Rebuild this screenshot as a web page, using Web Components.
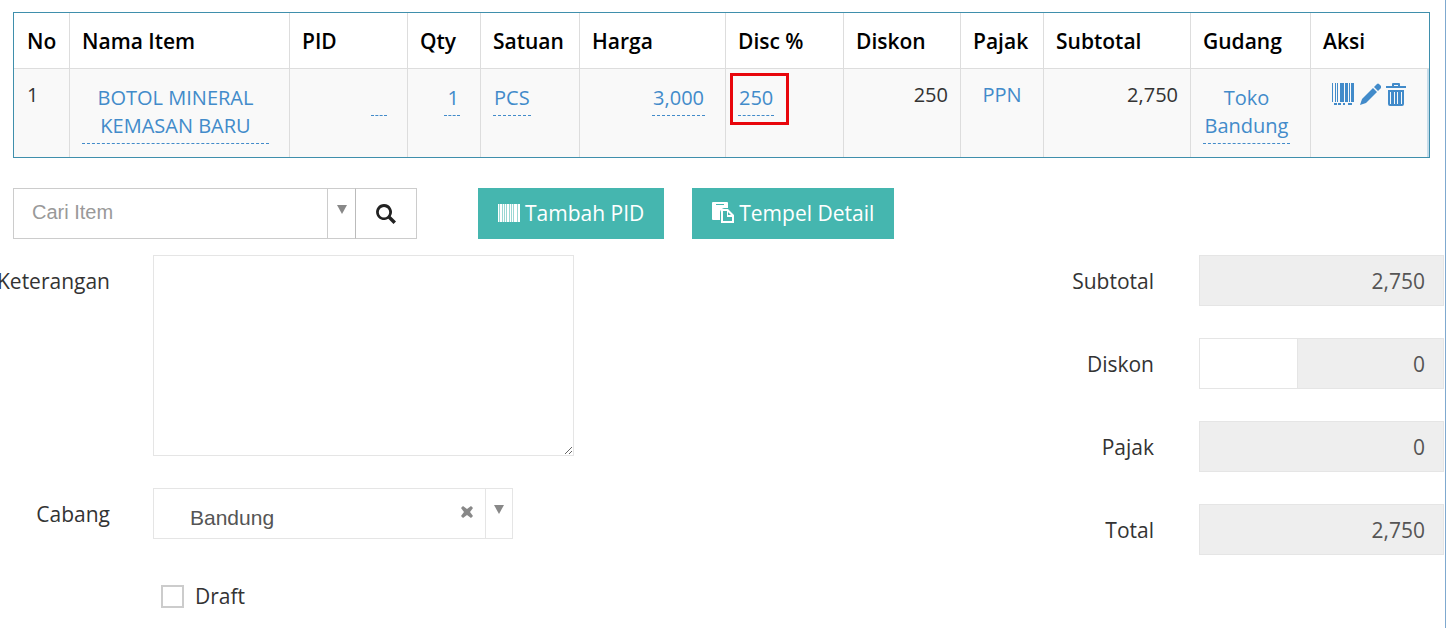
<!DOCTYPE html>
<html lang="id">
<head>
<meta charset="utf-8">
<meta name="viewport" content="width=device-width, initial-scale=1">
<title>Detail Item</title>
<style>
  html, body { margin: 0; background: #fff; }
  body { font: 20px/28px "Open Sans", sans-serif; color: #333; }
</style>
</head>
<body>
<invoice-page></invoice-page>
<script>
const define = (name, html, init) => {
  const tpl = document.createElement('template');
  tpl.innerHTML = html;
  customElements.define(name, class extends HTMLElement {
    constructor() {
      super();
      this.attachShadow({ mode: 'open' }).append(tpl.content.cloneNode(true));
    }
    connectedCallback() {
      if (init && !this.ready) { this.ready = true; init(this, this.shadowRoot); }
    }
  });
};

const bars = (list, h) => list.map(([x, w]) => `<rect x="${x}" y="0" width="${w}" height="${h}"/>`).join('');
const icons = {
  'barcode-scan': [23, 22, bars([[0, 1], [3, 1], [5, 1], [8, 4], [13, 3], [17, 1], [19, 3]], 19) +
    '<path d="M2 20h3v2H2zM6 20h3v2H6zM11 20h2v2h-2zM16 20h4v2h-4z"/>'],
  barcode: [22, 18, '<path d="M0 0h22v18H0z" opacity=".45"/>' +
    bars([[0, 1], [2, 2], [5, 1], [7, 1], [9, 2], [12, 1], [14, 1], [16, 3], [20, 2]], 18)],
  pencil: [21, 22, '<path d="M0 22l2-6L13 5l4 4L6 20z"/><path d="M14 4l3-3q1-1 2 0l2 2q1 1 0 2l-3 3z"/>'],
  trash: [20, 23, '<path fill-rule="evenodd" d="M6 3V1q0-1 1-1h6q1 0 1 1v2h6v2H0V3zM8 2v1h4V2zM2 7h16v14q0 2-2 2H4q-2 0-2-2zM4 9v12h1V9zM8 9v12h1V9zM11 9v12h1V9zM15 9v12h1V9z"/>'],
  search: [20, 20, '<path fill-rule="evenodd" d="M8 0a8 8 0 0 1 6.700 12.300L20 17.500 17.500 20l-5.200-5.200A8 8 0 1 1 8 0zm0 3a5.200 5.200 0 1 0 0 10.400A5.200 5.200 0 0 0 8 3z"/>'],
  paste: [22, 21, '<path fill-rule="evenodd" d="M1 0h14q1 0 1 1v5h-4q-4 1-4 5v7H1q-1 0-1-1V1q0-1 1-1zM4 2v1h8V2z"/><path fill-rule="evenodd" d="M9 7h7l6 6v8H9zm2 2v10h9v-4h-5V9zm5 1v3h3z"/>'],
  caret: [10, 9, '<path d="M0 0h10L5 9z"/>'],
  close: [12, 12, '<path d="M0 2l2-2 4 3 4-3 2 2-3 4 3 4-2 2-4-3-4 3-2-2 3-4z"/>']
};

define('ui-icon', `<style>:host{display:inline-block;flex:none}svg{display:block;fill:currentColor}</style>`, (el, root) => {
  const [w, h, body] = icons[el.getAttribute('name')];
  root.innerHTML += `<svg width="${w}" height="${h}" viewBox="0 0 ${w} ${h}" aria-hidden="true">${body}</svg>`;
});

define('action-button', `
<style>
  :host { display: block; }
  button { display: flex; align-items: center; gap: 5px; height: 51px; padding: 0 20px 2px; border: 0;
    background: #45b6af; color: #fff; font: inherit; font-size: 21px; white-space: nowrap; cursor: pointer; }
</style>
<button type="button"><slot name="icon"></slot><span><slot></slot></span></button>`);

/* Drop-down with a separated arrow cell and an optional clear button */
define('combo-box', `
<style>
  :host { display: block; --line: #e5e5e5; --ink: #555; --size: 20px; --arrow: 28px; --pad: 0 60px 4px 18px; }
  .box { display: grid; grid-template-columns: 1fr auto var(--arrow); height: 49px; border: 1px solid var(--line); background: #fff; }
  select { grid-area: 1 / 1 / 2 / 4; appearance: none; width: 100%; height: 100%; margin: 0; border: 0; border-radius: 0;
    background: transparent; color: var(--ink); font: var(--size)/28px "Liberation Sans", sans-serif; padding: var(--pad); }
  .clear { grid-area: 1 / 2; z-index: 1; border: 0; padding: 0 12px 3px; background: none; color: #888; display: flex; align-items: center; }
  .clear[hidden] { display: none; }
  .arrow { grid-area: 1 / 3; z-index: 1; pointer-events: none; border-left: 1px solid var(--line); color: #888;
    display: flex; justify-content: center; padding-top: 16px; }
</style>
<div class="box">
  <select></select>
  <button class="clear" type="button" aria-label="Hapus pilihan" hidden><ui-icon name="close"></ui-icon></button>
  <span class="arrow"><ui-icon name="caret"></ui-icon></span>
</div>`, (el, root) => {
  const select = root.querySelector('select');
  select.add(new Option(el.getAttribute('value')));
  select.setAttribute('aria-label', el.getAttribute('label'));
  const clear = root.querySelector('.clear');
  clear.hidden = !el.hasAttribute('clearable');
  clear.onclick = () => { select.selectedIndex = -1; };
});

/* Inline-editable table value */
define('edit-link', `
<style>
  :host { display: block; padding-top: 3px; }
  a { display: inline-block; vertical-align: top; box-sizing: border-box; min-width: 16px; min-height: 32px; padding: 0 1px 3px;
    border-bottom: 1px dashed #428bca; color: #428bca; text-decoration: none; }
  :host([wide]) a { display: block; text-align: center; }
</style>
<a href="#"><slot></slot></a>`);

define('item-table', `
<style>
  :host { display: block; border: 1px solid #3f8fac; }
  table { width: 100%; table-layout: fixed; border-collapse: separate; border-spacing: 0; }
  th, td { box-sizing: border-box; border-left: 1px solid #ddd; padding: 12px 12px 13px; text-align: left; vertical-align: top; }
  th { height: 56px; padding: 0 0 0 12px; vertical-align: middle; font-size: 21px; font-weight: 600; color: #000; border-bottom: 1px solid #ddd; white-space: nowrap; }
  th:first-child, td:first-child { border-left: 0; padding-left: 13px; }
  td { background: #f9f9f9; }
  td:last-child { border-right: 2px solid #c5dcea; }
  .num { text-align: right; }
  .mid { text-align: center; }
  .edit { padding-right: 20px; }
  a { color: #428bca; text-decoration: none; }
  .marked { position: relative; }
  .marked::after { content: ""; position: absolute; left: 4px; top: 4px; width: 53px; height: 46px; border: 3px solid #e8060c; pointer-events: none; }
  .tools { display: flex; justify-content: center; gap: 5px; padding-top: 2px; }
</style>
<table>
  <colgroup>
    <col style="width:55px"><col style="width:220px"><col style="width:118px"><col style="width:73px">
    <col style="width:99px"><col style="width:146px"><col style="width:118px"><col style="width:117px">
    <col style="width:83px"><col style="width:147px"><col style="width:120px"><col style="width:119px">
  </colgroup>
  <thead><tr><th>No</th><th>Nama Item</th><th>PID</th><th>Qty</th><th>Satuan</th><th>Harga</th><th>Disc %</th><th>Diskon</th><th>Pajak</th><th>Subtotal</th><th>Gudang</th><th>Aksi</th></tr></thead>
  <tbody><tr>
    <td>1</td>
    <td class="edit"><edit-link wide>BOTOL MINERAL KEMASAN BARU</edit-link></td>
    <td class="edit num"><edit-link></edit-link></td>
    <td class="edit num"><edit-link>1</edit-link></td>
    <td class="edit"><edit-link>PCS</edit-link></td>
    <td class="edit num"><edit-link>3,000</edit-link></td>
    <td class="edit marked"><edit-link>250</edit-link></td>
    <td class="num">250</td>
    <td class="mid"><a href="#">PPN</a></td>
    <td class="num">2,750</td>
    <td class="edit"><edit-link wide>Toko Bandung</edit-link></td>
    <td><div class="tools">
      <a href="#" aria-label="Barcode"><ui-icon name="barcode-scan"></ui-icon></a>
      <a href="#" aria-label="Ubah"><ui-icon name="pencil"></ui-icon></a>
      <a href="#" aria-label="Hapus"><ui-icon name="trash"></ui-icon></a>
    </div></td>
  </tr></tbody>
</table>`);

define('item-toolbar', `
<style>
  :host { display: flex; flex-wrap: wrap; gap: 28px; }
  .search { display: flex; margin-right: 33px; }
  combo-box { width: 343px; --line: #ccc; --ink: #999; }
  .go { width: 62px; height: 51px; padding: 0; border: 1px solid #ccc; border-left-color: #bbb; margin-left: -1px; background: #fff; color: #222;
    display: flex; align-items: center; justify-content: center; }
</style>
<div class="search">
  <combo-box label="Cari Item" value="Cari Item"></combo-box>
  <button class="go" type="button" aria-label="Cari"><ui-icon name="search"></ui-icon></button>
</div>
<action-button><ui-icon slot="icon" name="barcode"></ui-icon>Tambah PID</action-button>
<action-button><ui-icon slot="icon" name="paste"></ui-icon>Tempel Detail</action-button>`);

define('detail-form', `
<style>
  :host { display: grid; grid-template-columns: 110px 421px; column-gap: 43px; row-gap: 32px; font-size: 21px; }
  label { display: flex; justify-content: flex-end; }
  .side { padding-top: 12px; height: 28px; }
  textarea { box-sizing: border-box; display: block; width: 100%; height: 201px; margin: 0; padding: 10px 18px; border: 1px solid #e5e5e5; font: inherit; color: #555; }
  combo-box { width: 360px; --size: 21px; --pad: 8px 60px 0 36px; --arrow: 27px; }
  .check { grid-column: 2; justify-content: flex-start; align-items: center; gap: 11px; padding: 11px 8px 0; }
  input { appearance: none; box-sizing: border-box; width: 23px; height: 23px; margin: 0; border: 2px solid #ccc; background: #fff; }
  input:checked { background: #45b6af; }
</style>
<label class="side" for="note">Keterangan</label><textarea id="note"></textarea>
<label class="side">Cabang</label><combo-box label="Cabang" value="Bandung" clearable></combo-box>
<label class="check"><input type="checkbox">Draft</label>`);

define('total-field', `
<style>
  :host { display: grid; grid-template-columns: 1fr 245px; column-gap: 45px; align-items: center; font-size: 21px; }
  label { text-align: right; }
  .group { display: flex; }
  input { box-sizing: border-box; height: 51px; min-width: 0; margin: 0; padding: 0 18px; border: 1px solid #e5e5e5; border-radius: 0;
    font: inherit; color: #555; text-align: right; background: #fff; }
  .amount { flex: 1; background: #eee; }
  .rate { width: 98px; border-right: 0; }
</style>
<label for="amount"></label>
<div class="group"><input class="amount" id="amount" readonly></div>`, (el, root) => {
  root.querySelector('label').textContent = el.getAttribute('label');
  root.querySelector('.amount').value = el.getAttribute('value');
  if (el.hasAttribute('rate')) {
    const rate = document.createElement('input');
    rate.className = 'rate';
    rate.setAttribute('aria-label', 'Diskon %');
    root.querySelector('.group').prepend(rate);
  }
});

define('total-list', `
<style>:host { display: flex; flex-direction: column; gap: 32px; width: 400px; }</style>
<total-field label="Subtotal" value="2,750"></total-field>
<total-field label="Diskon" value="0" rate></total-field>
<total-field label="Pajak" value="0"></total-field>
<total-field label="Total" value="2,750"></total-field>`);

define('invoice-page', `
<style>
  :host { display: block; box-sizing: border-box; min-height: 100vh; margin-right: 1px; padding-top: 12px; border-right: 1px solid #7fa9cf; }
  item-table { margin: 0 15px 0 13px; }
  item-toolbar { margin: 30px 15px 16px 13px; }
  .columns { display: flex; justify-content: space-between; padding-right: 1px; }
</style>
<item-table></item-table>
<item-toolbar></item-toolbar>
<div class="columns"><detail-form></detail-form><total-list></total-list></div>`);
</script>
</body>
</html>
